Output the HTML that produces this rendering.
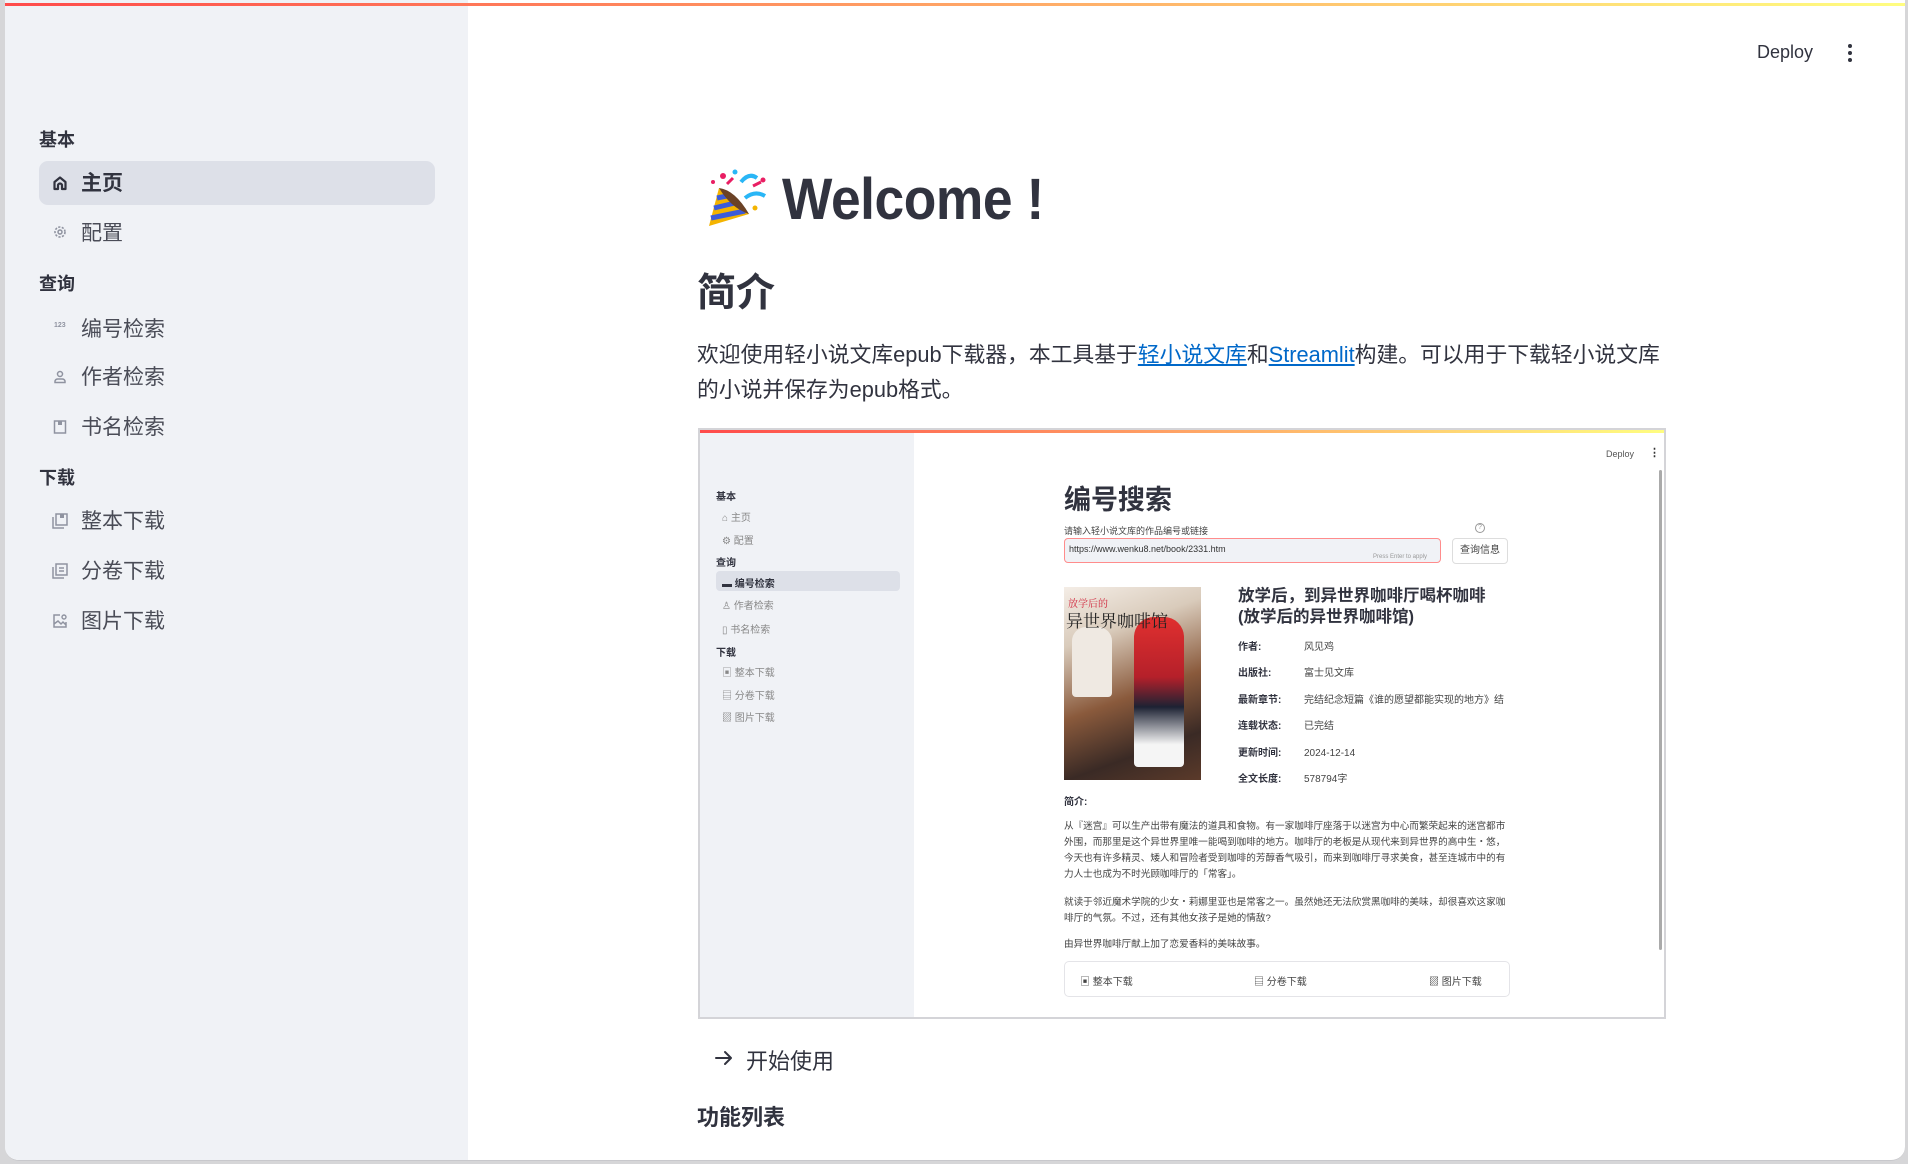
<!DOCTYPE html>
<html><head><meta charset="utf-8">
<style>
*{margin:0;padding:0;box-sizing:border-box}
body{width:1908px;height:1164px;overflow:hidden;background:#d6d6d8;font-family:"Liberation Sans","Noto Sans CJK SC",sans-serif;color:#31333f;position:relative}
.win{position:absolute;left:5px;top:0;width:1900px;height:1161px;background:#fff;border-radius:0 0 14px 14px;overflow:hidden;border-bottom:1px solid #c8c8cc}
.abs{position:absolute;white-space:nowrap}
.side{position:absolute;left:0;top:0;width:463px;height:100%;background:#f0f2f6}
.topline{position:absolute;left:0;top:3px;width:100%;height:3px;background:linear-gradient(90deg,#ff4b4b,#fffd80)}
.sh{font-size:18px;font-weight:bold;color:#31333f}
.it{font-size:21px;color:#31333f;line-height:1}
.ic{position:absolute;width:16px;height:16px}
</style></head><body>
<div class="win">
<div class="side"></div>
<div class="topline"></div>

<div class="abs sh" style="left:34px;top:126px">基本</div>
<div class="abs" style="left:34px;top:161px;width:396px;height:44px;background:#dde0e8;border-radius:9px"></div>
<svg class="ic" style="left:47px;top:175px" viewBox="0 0 16 16"><path d="M2.5 14V7L8 2.5 13.5 7V14H10V10.5a2 2 0 0 0-4 0V14Z" fill="none" stroke="#31333f" stroke-width="2.2" stroke-linejoin="round"/></svg>
<div class="abs it" style="left:76px;top:173px;font-weight:bold">主页</div>
<svg class="ic" style="left:47px;top:224px" viewBox="0 0 16 16"><circle cx="8" cy="8" r="5" fill="none" stroke="#8f93a0" stroke-width="1.6" stroke-dasharray="2.2 1.4"/><circle cx="8" cy="8" r="2" fill="none" stroke="#8f93a0" stroke-width="1.5"/></svg>
<div class="abs it" style="left:76px;top:223px;color:#4a4c57">配置</div>

<div class="abs sh" style="left:34px;top:270px">查询</div>
<div class="abs" style="left:49px;top:322px;font-size:7px;color:#8f93a0;font-weight:bold">123</div>
<div class="abs it" style="left:76px;top:319px;color:#4a4c57">编号检索</div>
<svg class="ic" style="left:47px;top:369px" viewBox="0 0 16 16"><circle cx="8" cy="5" r="2.5" fill="none" stroke="#8f93a0" stroke-width="1.5"/><path d="M3 13.5h10V12a3 3 0 0 0-3-2H6a3 3 0 0 0-3 2Z" fill="none" stroke="#8f93a0" stroke-width="1.5"/></svg>
<div class="abs it" style="left:76px;top:367px;color:#4a4c57">作者检索</div>
<svg class="ic" style="left:47px;top:419px" viewBox="0 0 16 16"><rect x="2.5" y="2" width="11" height="12" fill="none" stroke="#8f93a0" stroke-width="1.5"/><rect x="6" y="2" width="4" height="4" fill="#8f93a0"/></svg>
<div class="abs it" style="left:76px;top:417px;color:#4a4c57">书名检索</div>

<div class="abs sh" style="left:34px;top:464px">下载</div>
<svg class="ic" style="left:46px;top:512px;width:18px;height:18px" viewBox="0 0 18 18"><rect x="5" y="2" width="11" height="11" fill="none" stroke="#8f93a0" stroke-width="1.5"/><path d="M2 5v11h11" fill="none" stroke="#8f93a0" stroke-width="1.5"/><rect x="9" y="2" width="4" height="4" fill="#8f93a0"/></svg>
<div class="abs it" style="left:76px;top:511px;color:#4a4c57">整本下载</div>
<svg class="ic" style="left:46px;top:562px;width:18px;height:18px" viewBox="0 0 18 18"><rect x="5" y="2" width="11" height="11" fill="none" stroke="#8f93a0" stroke-width="1.5"/><path d="M2 5v11h11M8 6h5M8 9h5" fill="none" stroke="#8f93a0" stroke-width="1.5"/></svg>
<div class="abs it" style="left:76px;top:561px;color:#4a4c57">分卷下载</div>
<svg class="ic" style="left:46px;top:612px;width:18px;height:18px" viewBox="0 0 18 18"><path d="M9 3H3v12h12V10M3 12l4-3 3 3 2-2 3 3" fill="none" stroke="#8f93a0" stroke-width="1.5"/><circle cx="13" cy="5" r="2" fill="none" stroke="#8f93a0" stroke-width="1.4"/></svg>
<div class="abs it" style="left:76px;top:611px;color:#4a4c57">图片下载</div>

<div class="abs" style="left:1752px;top:42px;font-size:18px;color:#31333f">Deploy</div>
<svg class="abs" style="left:1841px;top:43px" width="8" height="20" viewBox="0 0 8 20"><circle cx="4" cy="3" r="2" fill="#31333f"/><circle cx="4" cy="10" r="2" fill="#31333f"/><circle cx="4" cy="17" r="2" fill="#31333f"/></svg>

<svg class="abs" style="left:700px;top:168px" width="66" height="62" viewBox="0 0 66 62">
<path d="M4 58 L14 20 L44 46 Z" fill="#f4b400"/>
<path d="M6 50 L40 43 M9 40 L30 35 M12 30 L22 28" stroke="#3b5bdb" stroke-width="5"/>
<path d="M14 20 Q30 22 44 46 Q26 40 14 20Z" fill="#6b4226"/>
<circle cx="18" cy="8" r="3" fill="#e91e63"/><circle cx="30" cy="4" r="2.5" fill="#29b6f6"/>
<path d="M36 14 Q44 4 52 10 M40 30 Q50 22 60 28" stroke="#29b6f6" stroke-width="4" fill="none"/>
<path d="M22 16 l6 -6 M48 18 l8 -4" stroke="#e91e63" stroke-width="3"/>
<circle cx="58" cy="12" r="2.5" fill="#e91e63"/><circle cx="50" cy="40" r="2.5" fill="#f4b400"/><circle cx="8" cy="14" r="2" fill="#e91e63"/>
</svg>
<div class="abs" style="left:777px;top:166px;font-size:58px;font-weight:bold;color:#31333f;letter-spacing:-0.5px;transform:scaleX(0.92);transform-origin:left">Welcome !</div>
<div class="abs" style="left:692px;top:262px;font-size:39px;font-weight:bold;color:#31333f">简介</div>
<div class="abs" style="left:692px;top:337px;font-size:21.8px;line-height:35px;color:#31333f">欢迎使用轻小说文库epub下载器，本工具基于<span style="color:#0068c9;text-decoration:underline">轻小说文库</span>和<span style="color:#0068c9;text-decoration:underline">Streamlit</span>构建。可以用于下载轻小说文库<br>的小说并保存为epub格式。</div>

<div class="abs" style="left:693px;top:428px;width:968px;height:591px;border:2px solid #d4d4d8;background:#fff;overflow:hidden">
 <div style="position:absolute;left:0;top:0;width:214px;height:100%;background:#f0f2f6"></div>
 <div style="position:absolute;left:0;top:0;width:100%;height:3px;background:linear-gradient(90deg,#ff4b4b,#fffd80)"></div>
 <div class="abs" style="left:906px;top:19px;font-size:9px;color:#555">Deploy</div>
 <div class="abs" style="left:949px;top:16px;font-size:11px;color:#333;font-weight:bold">⋮</div>
 <div style="position:absolute;left:959px;top:40px;width:3px;height:480px;background:#aaa;border-radius:2px"></div>
 <div style="position:absolute;left:16px;top:141px;width:184px;height:20px;background:#dde0e8;border-radius:4px"></div>
 <div class="abs" style="left:16px;top:58px;font-size:10px;font-weight:bold">基本</div>
 <div class="abs" style="left:22px;top:79px;font-size:10px;color:#888">⌂ 主页</div>
 <div class="abs" style="left:22px;top:102px;font-size:10px;color:#888">⚙ 配置</div>
 <div class="abs" style="left:16px;top:124px;font-size:10px;font-weight:bold">查询</div>
 <div class="abs" style="left:22px;top:145px;font-size:10px;font-weight:bold">▬ 编号检索</div>
 <div class="abs" style="left:22px;top:167px;font-size:10px;color:#888">♙ 作者检索</div>
 <div class="abs" style="left:22px;top:191px;font-size:10px;color:#888">▯ 书名检索</div>
 <div class="abs" style="left:16px;top:214px;font-size:10px;font-weight:bold">下载</div>
 <div class="abs" style="left:22px;top:234px;font-size:10px;color:#888">▣ 整本下载</div>
 <div class="abs" style="left:22px;top:257px;font-size:10px;color:#888">▤ 分卷下载</div>
 <div class="abs" style="left:22px;top:279px;font-size:10px;color:#888">▨ 图片下载</div>

 <div class="abs" style="left:364px;top:48px;font-size:27px;font-weight:bold">编号搜索</div>
 <div class="abs" style="left:364px;top:94px;font-size:9px;color:#444">请输入轻小说文库的作品编号或链接</div>
 <div class="abs" style="left:775px;top:93px;width:10px;height:10px;border:1px solid #999;border-radius:50%;font-size:7px;text-align:center;color:#999">?</div>
 <div style="position:absolute;left:364px;top:108px;width:377px;height:25px;background:#f0f2f6;border:1px solid #ff8c8c;border-radius:4px"></div>
 <div class="abs" style="left:369px;top:114px;font-size:9px;color:#333">https://www.wenku8.net/book/2331.htm</div>
 <div class="abs" style="left:673px;top:124px;font-size:6px;color:#999">Press Enter to apply</div>
 <div style="position:absolute;left:752px;top:108px;width:56px;height:26px;border:1px solid #ddd;border-radius:4px;font-size:10px;color:#444;text-align:center;line-height:24px">查询信息</div>

 <div style="position:absolute;left:364px;top:157px;width:137px;height:193px;background:linear-gradient(160deg,#f4ede6 0%,#d9cbbb 25%,#8a5a3c 55%,#3a2a25 80%,#5b3a2a 100%);overflow:hidden">
  <div style="position:absolute;left:70px;top:30px;width:50px;height:150px;background:linear-gradient(180deg,#e0302f,#b5202a 40%,#1d2233 60%,#f5f5f5 85%);border-radius:20px 20px 4px 4px"></div>
  <div style="position:absolute;left:8px;top:40px;width:40px;height:70px;background:#efe9e2;border-radius:14px 14px 4px 4px"></div>
  <div class="abs" style="left:4px;top:8px;font-size:10px;color:#d0243a;font-family:'Noto Serif CJK SC',serif">放学后的</div>
  <div class="abs" style="left:2px;top:20px;font-size:17px;color:#222;font-family:'Noto Serif CJK SC',serif">异世界咖啡馆</div>
 </div>
 <div class="abs" style="left:538px;top:156px;font-size:16.5px;font-weight:bold;line-height:21px">放学后，到异世界咖啡厅喝杯咖啡<br>(放学后的异世界咖啡馆)</div>
 <div class="abs" style="left:538px;top:205px;font-size:10px;line-height:26.4px;font-weight:bold">作者:<br>出版社:<br>最新章节:<br>连载状态:<br>更新时间:<br>全文长度:</div>
 <div class="abs" style="left:604px;top:205px;font-size:10px;line-height:26.4px;color:#444">风见鸡<br>富士见文库<br>完结纪念短篇《谁的愿望都能实现的地方》结<br>已完结<br>2024-12-14<br>578794字</div>
 <div class="abs" style="left:364px;top:363px;font-size:10px;font-weight:bold">简介:</div>
 <div class="abs" style="left:364px;top:389px;font-size:9.6px;line-height:16px;color:#444;white-space:normal;width:448px">从『迷宫』可以生产出带有魔法的道具和食物。有一家咖啡厅座落于以迷宫为中心而繁荣起来的迷宫都市外围，而那里是这个异世界里唯一能喝到咖啡的地方。咖啡厅的老板是从现代来到异世界的高中生・悠，今天也有许多精灵、矮人和冒险者受到咖啡的芳醇香气吸引，而来到咖啡厅寻求美食，甚至连城市中的有力人士也成为不时光顾咖啡厅的「常客」。</div>
 <div class="abs" style="left:364px;top:465px;font-size:9.6px;line-height:16px;color:#444;white-space:normal;width:448px">就读于邻近魔术学院的少女・莉娜里亚也是常客之一。虽然她还无法欣赏黑咖啡的美味，却很喜欢这家咖啡厅的气氛。不过，还有其他女孩子是她的情敌?</div>
 <div class="abs" style="left:364px;top:506px;font-size:9.6px;color:#444">由异世界咖啡厅献上加了恋爱香料的美味故事。</div>
 <div style="position:absolute;left:364px;top:531px;width:446px;height:36px;border:1px solid #e4e4e8;border-radius:5px"></div>
 <div class="abs" style="left:380px;top:543px;font-size:10px;color:#444">▣ 整本下载</div>
 <div class="abs" style="left:554px;top:543px;font-size:10px;color:#444">▤ 分卷下载</div>
 <div class="abs" style="left:729px;top:543px;font-size:10px;color:#444">▨ 图片下载</div>
</div>

<svg class="abs" style="left:709px;top:1048px" width="20" height="20" viewBox="0 0 20 20"><path d="M2 10h15M11 4l6 6-6 6" fill="none" stroke="#31333f" stroke-width="2" stroke-linecap="round" stroke-linejoin="round"/></svg>
<div class="abs" style="left:741px;top:1044px;font-size:22px;color:#31333f">开始使用</div>
<div class="abs" style="left:692px;top:1100px;font-size:22px;font-weight:bold;color:#31333f">功能列表</div>
</div>
</body></html>
